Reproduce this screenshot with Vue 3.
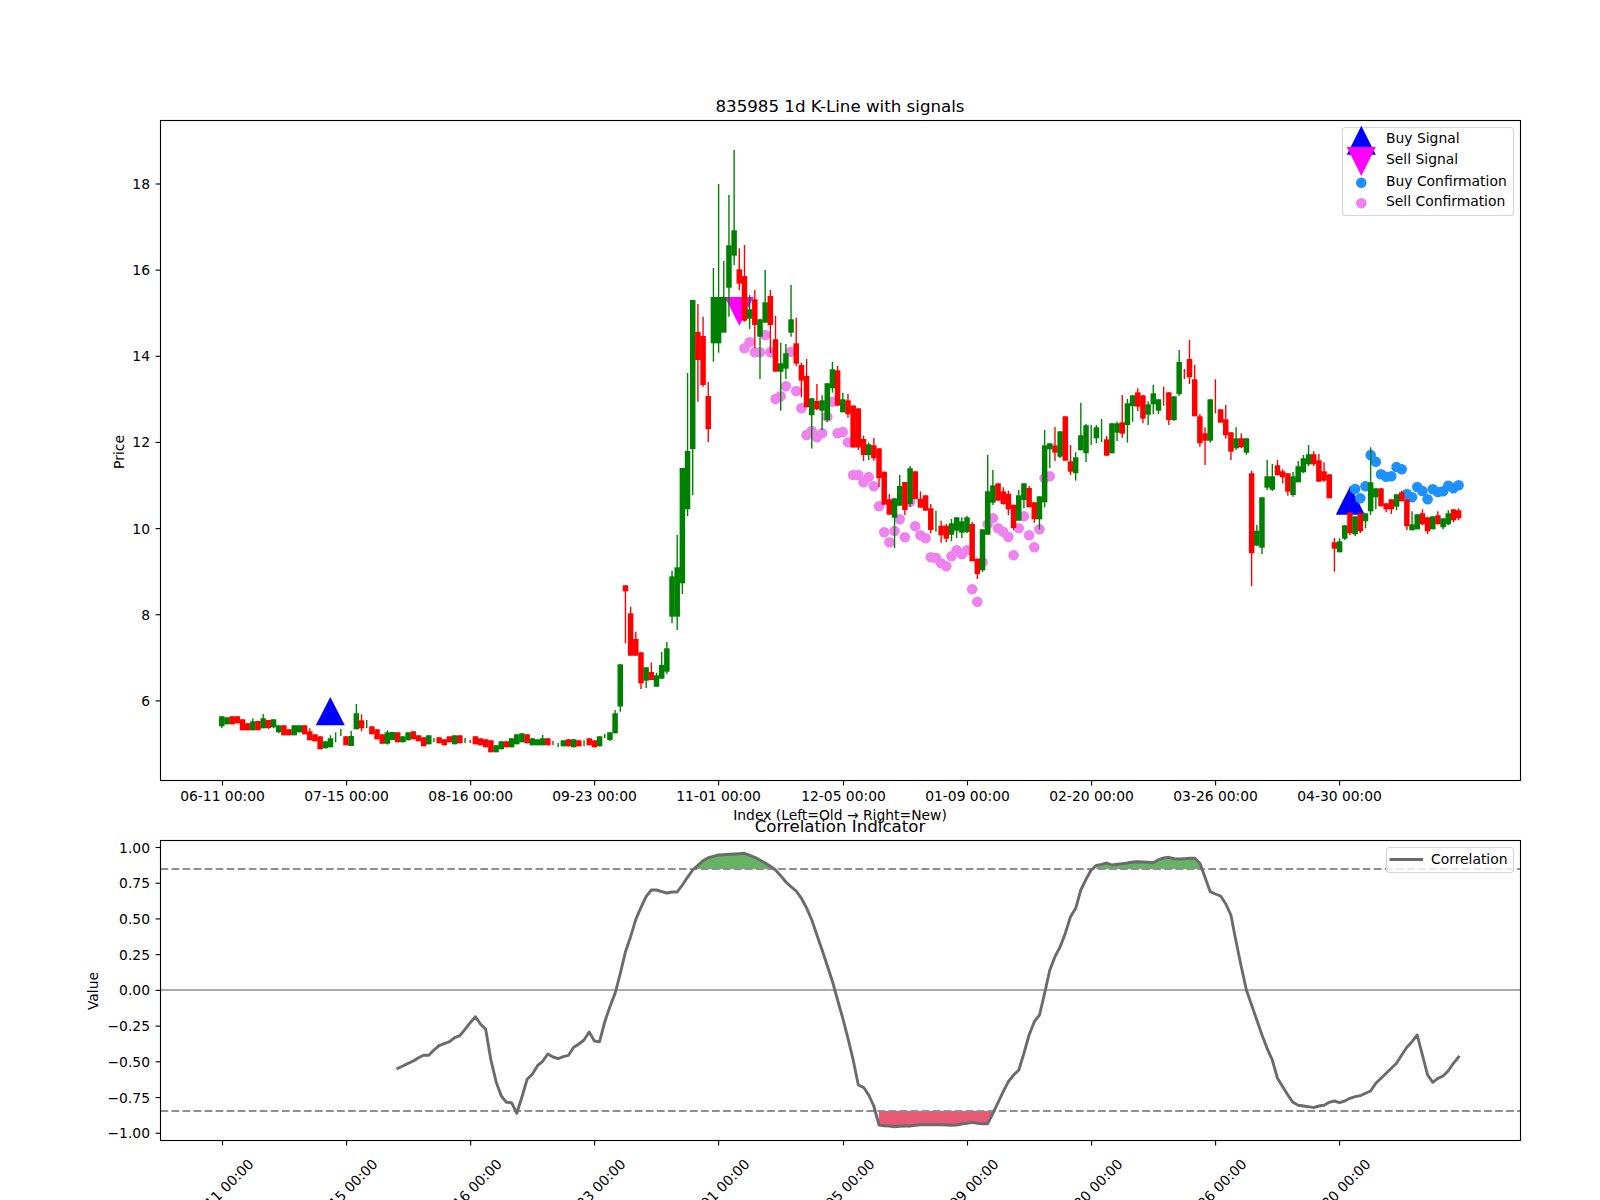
<script setup>
const xOf = (i) => 221.8 + 5.175 * i

// [isRed, bodyTop, bodyBottom, wickTop?, wickBottom?] in plot pixels, one row per trading day
const raw = [
[0,716.3,726.3,716.3,728],[0,717.3,724.3],[1,716.3,724.3],[1,716.3,723.3],[1,719.3,730.3],[1,723.3,730.3],[0,721.3,730.3,718.3],[1,721,730.3],[0,718.3,728.3,714],[1,720,728,720,729],
[0,719.3,727.3,719.3,728.3],[0,725.3,732.3,725.3,733.3],[1,725.3,735.3],[1,729.3,735.3],[0,725.3,735.3],[0,725.3,732.3],[1,725.3,734.3],[1,731.3,740.3,728.3],[1,734.3,741.3],[1,736.3,749.3],
[0,741.3,748.3],[0,738.3,747.3,735.3],[0,737,737,732.3,742.3],[0,732,732,729,736],[1,736.3,745.3],[0,736,746,731],[0,713.3,729.3,704,729.3],[1,720.3,728.3,714.3,731.3],[0,724,724,720,728],[1,726.3,734.3],
[1,729.3,739.3],[1,734.3,743.7],[0,732.3,743.7,730.3,744.7],[0,732,740],[1,732.3,742.3],[0,736.3,742.3],[0,732.3,740.3],[1,731.3,739.3],[1,735.3,741.3],[1,737.3,746.3],
[0,735.3,744.3],[0,740,740,738,742],[1,737.3,743.3],[1,739.3,745.3],[1,736.3,742.3],[0,735.3,744.3],[1,735.3,743.3],[0,740,740,738,743],[1,741,741,740,743],[1,736.3,744.3],
[1,738.3,745.3],[1,739.3,747.3],[1,740.3,752.3],[0,745.3,752.3],[0,741.3,749.3],[1,741.3,747.3],[0,738.3,747.3],[0,734.3,744.3],[0,733.3,742.3],[1,734.3,743.3],
[0,738.3,745.3],[0,739.3,745.3],[0,738.3,745.3,735],[1,738.3,745.3],[1,743,743,741,745],[0,745,745,743,747],[0,740.3,746.3],[1,739.3,746.3],[0,739.3,747.3],[1,740.3,746.3],
[0,743,743,740.3,746.3],[1,738.3,745.3],[1,740.3,747.3],[0,736.3,746.3],[0,736,736,734,738],[0,732.3,740,732.3,741],[0,713.3,733.3,710],[0,664.3,706.5,664.3,711.7],[1,585.3,591.3,585.3,643.3],[1,613.3,655.7,606.7],
[1,639,655.7,631.7],[1,652.3,683.3,652.3,689],[0,667.3,680.7,667.3,688],[1,672,680,662.7],[0,675.3,686.7,672.7],[0,665,678.7,652],[0,648.3,671.7,642,674],[0,576.3,616.7,570.7,623.3],[0,567.3,616.7,535,630],[0,468,583.3,468,594],
[0,451,509.3,373,516],[0,300,449,300,495],[1,332,360,304,401.7],[1,336,385,316.7,386.7],[1,396,429.3,382,442],[0,297,343.3,268,361.7],[0,297,343.3,184,352.7],[0,297,332.7,261,317.7],[0,245.3,287.7,195,316.7],[0,230.3,255.7,150,265],
[1,269.3,283.7,248.3,290],[1,276,320.7,245,321.7],[0,309.3,318.7,295,329],[1,299.3,325,290,348.3],[0,319.3,336.7,319,379],[0,302.3,322.7,270],[1,296,325,290,353],[1,339.3,371.7,316],[0,363.3,371.7,342.7,410.7],[0,353.3,368.7,344,379],
[0,319.3,332.7,285,336.7],[1,343.3,363.7,317.7,366],[1,365,380.7,362.7,397.3],[1,376,407.3,359],[0,398.3,415.3,398,448.5],[1,401,409.3,384,410],[0,400.3,410.7,395.3,430],[0,383.3,420,383,421.7],[0,369.3,388.3,361.7,392.7],[1,370.3,405.7,366],
[0,399.3,412.3,392.7],[1,400.3,414.3,394,417.7],[1,405.5,447.5],[1,408.3,447.5,408.3,450],[1,439,455,435.7,461],[0,444.3,455,442.7,460],[1,445.3,458.3,438,460.7],[1,448.3,478.3,448.3,487],[1,471.7,504.7],[1,499.3,514.7,494,515],
[0,498.3,517.7,498,548],[0,486,505.7,475,505.7],[1,482,510,482,515],[0,468.3,504,466,506.7],[1,471.3,499],[1,498.7,507.7,491.3],[1,495.3,510.7],[1,508.3,530,504,533.3],[0,521,521,510.7,531.7],[1,525.7,535.3,520.7,542.7],
[1,525.7,538.7,524,542],[0,523.3,534.7,519,541],[0,517.3,530.7,517.3,538],[0,521.3,532.7,517.3,538],[0,517.3,532,515.7,533.3],[1,524,561.3,521.7],[1,558.7,574,558.7,579],[0,529.3,570.3,529.3,572],[0,491.3,534.7,455],[0,485.3,502.7,470,505],
[1,483.3,500.7],[1,491.3,504,487.3,504.7],[1,493.7,509.3,490.7,515],[1,504.7,528,504.7,530],[0,495.3,520.7,490],[0,483.3,500,483.3,508.3],[1,488,507.3,486],[1,502.3,519.3,502.3,522.7],[0,496.3,519.3,496.3,529.3],[0,445.3,502.3,430,507.3],
[0,443.3,449.3,443.3,468],[1,445.3,452.7,427,461],[0,431.3,456.7,431.3,458],[1,416.3,460.7],[1,461.3,471.7,445,475],[0,457.3,473.3,452.3,480.7],[0,435.3,450.3,402.7],[0,425.3,453.3,424,462],[0,435,435,425,445],[0,427.3,438.3,425,443.3],
[0,430,430,419,442],[1,439.3,455.7,436],[0,423.3,453.3],[0,423.3,432.7,421.7,441],[1,422.3,433.7,395,437.7],[0,403.3,425,399,442.7],[0,395.3,406,395.3,421.7],[1,392.3,406.7,388.3,411],[1,395.3,418.7,395.3,423.3],[0,404.3,414.7,401.3,425],
[0,393.3,404.3,385,414],[0,399.3,410.7,399.3,414],[1,396,396,386.7,405.7],[1,392.3,420,392.3,425],[0,396.3,420,396.3,421],[0,362,394,350,396],[1,374,374,369,379],[1,359,377.3,340,384],[1,379.3,416.3,365],[1,416.3,443.3,414,446.7],
[1,433.3,440.7,427.3,465],[0,399.3,440.7,399.3,442.7],[1,396,396,379.3,413.3],[1,409.3,422.7],[1,419.3,435.3,405,438.7],[1,432.3,451.7,432.3,460],[0,438.3,448.3,427.3,450],[1,438.3,447.3,433.3,448],[0,438.3,452.7,438.3,454.7],[1,473.3,553.3,470.7,586],
[0,530.7,545.7,525],[0,497.3,547.7,497.3,554],[0,476.3,487.7,460,490],[0,476.3,489.7,464,491],[1,465.3,475.3,460],[1,471.3,477.3,469.3,483.3],[1,473.3,491.7,473.3,495.7],[0,476.3,495,472,496.7],[0,466.3,482.3,461,482.3],[0,458.3,472.3,455,473],
[0,454.3,464.3,445,466],[1,454.3,464.3,451.3,466],[1,460.3,481.7,454],[1,471.3,480.7,462.3,481.7],[1,474.3,498.3],[1,542.3,548.7,538,571.7],[0,541.3,552.3,538.3],[0,525.3,538.7,525.3,540],[1,512.3,533.3,512.3,535],[0,516.3,534.3,516.3,536.3],
[1,513.3,531.3,513.3,533.3],[0,513.3,521.3,513.3,528.3],[0,482.3,511.3,447.3,515],[0,488.3,497.3,488.3,509],[1,488.3,506.3],[1,503.3,509.3,503.3,512.3],[1,499.3,509.3,499.3,514],[0,494.3,506.7,494.3,510.3],[1,492.3,501.3,490.7],[1,499.3,526.3,499.3,530],
[0,524.3,530.3,511.3],[0,514.3,529.3],[1,513.3,524.3,509.3,525.3],[1,517.3,531.3,517.3,534],[0,516.3,529.3],[1,515.3,524.3,511.3],[0,518.3,527.3,518.3,529.3],[0,513.3,524.3,510.3,525.3],[1,509.3,520.3,509.3,522.3],[1,510.3,518.3,508.3,520.3],
]

const candles = raw.map((r, i) => ({
  x: xOf(i),
  color: r[0] ? '#ff0000' : '#008000',
  top: r[1],
  h: r[2] - r[1],
  wt: r[3] ?? r[1],
  wb: r[4] ?? r[2],
}))

const sellY = [348.3,342.3,352.3,352.3,335,352.3,399,396.3,386.3,351.7,391,408.3,435,431,437.3,433.3,416.7,401.7,433.3,432,442.3,475,475,482.3,477,486.3,506.3,532.3,542.3,531,519.3,537.3,501.7,526.3,535.3,538.3,557.3,558,563.3,566.3,556.3,550.3,554.3,550.3,589.3,601.7,562.3,524.3,518.3,528.3,531.7,537,555.3,528.3,516.3,535.3,547.3,529.3,478.3,476.3]
const buyY = [489,498.3,486.3,455,461.7,474.3,476.7,476.3,467,469.3,494,497.3,487,491,499.3,489.3,492,491.3,485.7,488.3,485.3]
const sellDots = sellY.map((y, k) => ({ x: xOf(101 + k), y }))
const buyDots = buyY.map((y, k) => ({ x: xOf(219 + k), y }))

const tri = (x, baseY, apexY, hw = 14.5) => `${x - hw},${baseY} ${x + hw},${baseY} ${x},${apexY}`
const buyMarks = [tri(330.3, 725.3, 697), tri(1350.3, 514.7, 485.7)]
const sellMark = tri(739.3, 297, 325.7)

const corrStart = 34
const corrRaw = [745,738,730,723,713,706,706,690,677,671,665,653,647,628,608,590,613,628,720,785,828,847,848,880,830,778,763,737,724,702,711,716,710,706,682,672,
660,636,663,665,605,560,520,460,395,350,298,262,230,210,210,215,219,216,216,195,172,150,136,122,113,109,105,104,103,102,101,100,106,112,120,129,139,150,167,186,200,213,235,264,300,345,390,437,485,540,595,655,720,795,802,825,858,915,917,918,920,919,918,918,916,914,914,914,914,914,915,916,915,912,910,907,910,911,911,880,848,815,785,765,750,700,645,605,585,520,450,410,380,340,290,
265,210,178,150,136,133,129,135,133,131,129,126,125,126,127,128,119,114,112,116,117,116,115,115,130,172,215,222,228,252,285,365,440,510,555,600,645,685,720,775,800,825,847,856,858,860,863,858,856,847,843,848,843,835,830,827,820,813,790,775,760,745,730,705,682,665,645,705,765,787,775,768,752,730,711]
const corrY = corrRaw.map((v) => 820 + v / 3)
const corrLine = corrY.map((y, k) => `${xOf(corrStart + k).toFixed(1)},${y.toFixed(1)}`).join(' ')

const UPPER = 869
const LOWER = 1111
const band = (from, to, level, clamp) => {
  const pts = []
  for (let i = from; i <= to; i++) pts.push(`${xOf(i).toFixed(1)},${clamp(corrY[i - corrStart], level).toFixed(1)}`)
  pts.push(`${xOf(to).toFixed(1)},${level}`, `${xOf(from).toFixed(1)},${level}`)
  return pts.join(' ')
}
const greenBands = [band(91, 107, UPPER, Math.min), band(169, 189, UPPER, Math.min)]
const redBand = band(127, 149, LOWER, Math.max)

const tickX = [222.5, 346.6, 470.7, 594.6, 718.6, 843.5, 967.5, 1091.6, 1215.6, 1339.6]
const tickNames = ['06-11 00:00', '07-15 00:00', '08-16 00:00', '09-23 00:00', '11-01 00:00', '12-05 00:00', '01-09 00:00', '02-20 00:00', '03-26 00:00', '04-30 00:00']
const xTicks = tickX.map((x, k) => ({ x, label: tickNames[k] }))
const priceTicks = [6, 8, 10, 12, 14, 16, 18].map((v, k) => ({ y: 700.9 - 86.15 * k, label: String(v) }))
const valueTicks = ['1.00', '0.75', '0.50', '0.25', '0.00', '−0.25', '−0.50', '−0.75', '−1.00'].map((label, k) => ({ y: 847.5 + 35.72 * k, label }))
const legendRows = [
  { y: 143, label: 'Buy Signal' },
  { y: 164, label: 'Sell Signal' },
  { y: 185.5, label: 'Buy Confirmation' },
  { y: 205.7, label: 'Sell Confirmation' },
]
</script>

<template>
  <div class="figure">
    <svg class="canvas" width="1600" height="1200" viewBox="0 0 1600 1200">
      <text class="title" x="840" y="112">835985 1d K-Line with signals</text>

      <polygon v-for="(p, k) in buyMarks" :key="'b' + k" class="mark-buy" :points="p" />
      <polygon class="mark-sell" :points="sellMark" />
      <circle v-for="(d, k) in sellDots" :key="'s' + k" class="dot-sell" :cx="d.x" :cy="d.y" r="5.3" />
      <circle v-for="(d, k) in buyDots" :key="'d' + k" class="dot-buy" :cx="d.x" :cy="d.y" r="5.3" />

      <g v-for="(c, k) in candles" :key="'c' + k">
        <line :x1="c.x" :x2="c.x" :y1="c.wt" :y2="c.wb" :stroke="c.color" stroke-width="1.39" />
        <rect v-if="c.h > 0" :x="c.x - 2.75" :y="c.top" width="5.5" :height="c.h" :fill="c.color" />
      </g>

      <rect class="frame" x="160.5" y="120.5" width="1360" height="660" />
      <g v-for="t in xTicks" :key="'x' + t.x">
        <line class="tick" :x1="t.x" :x2="t.x" y1="781" y2="785.4" />
        <text class="label middle" :x="t.x" y="801">{{ t.label }}</text>
      </g>
      <g v-for="t in priceTicks" :key="'p' + t.label">
        <line class="tick" x1="155.6" x2="160" :y1="t.y" :y2="t.y" />
        <text class="label end" x="150" :y="t.y + 5">{{ t.label }}</text>
      </g>
      <text class="label middle" transform="translate(124 452) rotate(-90)">Price</text>
      <text class="label middle" x="840" y="820">Index (Left=Old → Right=New)</text>

      <rect class="legend-box" x="1342.5" y="127.5" width="171" height="88" rx="3" />
      <polygon class="mark-buy" :points="tri(1361.3, 154.7, 125.7)" />
      <polygon class="mark-sell" :points="tri(1361.3, 147, 176)" />
      <circle class="dot-buy" cx="1361.3" cy="182.7" r="5.3" />
      <circle class="dot-sell" cx="1361.3" cy="203.3" r="5.3" />
      <text v-for="r in legendRows" :key="r.label" class="label" x="1386" :y="r.y">{{ r.label }}</text>

      <text class="title" x="840" y="832">Correlation Indicator</text>
      <polygon v-for="(p, k) in greenBands" :key="'g' + k" class="band-green" :points="p" />
      <polygon class="band-red" :points="redBand" />
      <line class="level" x1="160.5" x2="1520" y1="869" y2="869" />
      <line class="level" x1="160.5" x2="1520" y1="1111" y2="1111" />
      <line class="zero" x1="160.5" x2="1520" y1="990" y2="990" />
      <polyline class="corr" :points="corrLine" />

      <rect class="frame" x="160.5" y="840.5" width="1360" height="300" />
      <g v-for="t in xTicks" :key="'y' + t.x">
        <line class="tick" :x1="t.x" :x2="t.x" y1="1141" y2="1145.4" />
        <text class="label middle" :transform="`translate(${t.x + 2} 1195) rotate(-45)`">{{ t.label }}</text>
      </g>
      <g v-for="t in valueTicks" :key="'v' + t.label">
        <line class="tick" x1="155.6" x2="160" :y1="t.y" :y2="t.y" />
        <text class="label end" x="150" :y="t.y + 5">{{ t.label }}</text>
      </g>
      <text class="label middle" transform="translate(98 991) rotate(-90)">Value</text>

      <rect class="legend-box" x="1386.5" y="847.5" width="127" height="25" rx="3" />
      <line class="corr" x1="1391" x2="1421.5" y1="859.5" y2="859.5" />
      <text class="label" x="1431" y="864">Correlation</text>
    </svg>
  </div>
</template>

<style scoped>
.figure {
  width: 1600px;
  height: 1200px;
  overflow: hidden;
  background: #ffffff;
}
.canvas {
  display: block;
}
.title {
  font-family: "DejaVu Sans", sans-serif;
  font-size: 16.67px;
  text-anchor: middle;
  fill: #000000;
}
.label {
  font-family: "DejaVu Sans", sans-serif;
  font-size: 13.89px;
  fill: #000000;
}
.middle {
  text-anchor: middle;
}
.end {
  text-anchor: end;
}
.frame {
  fill: none;
  stroke: #000000;
  stroke-width: 1.11;
}
.tick {
  stroke: #000000;
  stroke-width: 1.11;
}
.mark-buy {
  fill: #0000ff;
}
.mark-sell {
  fill: #ff00ff;
}
.dot-buy {
  fill: #1e90ff;
}
.dot-sell {
  fill: #ee82ee;
}
.legend-box {
  fill: rgba(255, 255, 255, 0.8);
  stroke: #d6d6d6;
  stroke-width: 1.11;
}
.band-green {
  fill: rgba(0, 128, 0, 0.6);
}
.band-red {
  fill: rgba(220, 20, 60, 0.7);
}
.level {
  stroke: #8f8f8f;
  stroke-width: 2.08;
  stroke-dasharray: 7.7 3.33;
}
.zero {
  stroke: #ababab;
  stroke-width: 2.08;
}
.corr {
  fill: none;
  stroke: #6b6b6b;
  stroke-width: 2.9;
  stroke-linejoin: round;
  stroke-linecap: square;
}
</style>
